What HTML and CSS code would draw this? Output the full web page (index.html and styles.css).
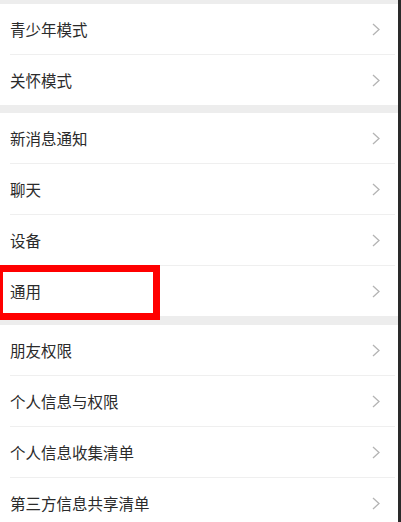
FILE: index.html
```html
<!DOCTYPE html>
<html lang="zh-CN">
<head>
<meta charset="utf-8">
<link rel="stylesheet" href="styles.css">
</head>
<body>
<div class="page">
  <div class="gap gap-top"></div>
  <div class="group">
    <div class="row"><span class="label">青少年模式</span><svg class="chev" viewBox="0 0 8 13"><polyline points="1,1 7,6.5 1,12"/></svg></div>
    <div class="row"><span class="label">关怀模式</span><svg class="chev" viewBox="0 0 8 13"><polyline points="1,1 7,6.5 1,12"/></svg></div>
  </div>
  <div class="gap"></div>
  <div class="group">
    <div class="row"><span class="label">新消息通知</span><svg class="chev" viewBox="0 0 8 13"><polyline points="1,1 7,6.5 1,12"/></svg></div>
    <div class="row"><span class="label">聊天</span><svg class="chev" viewBox="0 0 8 13"><polyline points="1,1 7,6.5 1,12"/></svg></div>
    <div class="row"><span class="label">设备</span><svg class="chev" viewBox="0 0 8 13"><polyline points="1,1 7,6.5 1,12"/></svg></div>
    <div class="row highlighted"><span class="label">通用</span><svg class="chev" viewBox="0 0 8 13"><polyline points="1,1 7,6.5 1,12"/></svg><div class="mark"></div></div>
  </div>
  <div class="gap gap-lower"></div>
  <div class="group">
    <div class="row"><span class="label">朋友权限</span><svg class="chev" viewBox="0 0 8 13"><polyline points="1,1 7,6.5 1,12"/></svg></div>
    <div class="row"><span class="label">个人信息与权限</span><svg class="chev" viewBox="0 0 8 13"><polyline points="1,1 7,6.5 1,12"/></svg></div>
    <div class="row"><span class="label">个人信息收集清单</span><svg class="chev" viewBox="0 0 8 13"><polyline points="1,1 7,6.5 1,12"/></svg></div>
    <div class="row"><span class="label">第三方信息共享清单</span><svg class="chev" viewBox="0 0 8 13"><polyline points="1,1 7,6.5 1,12"/></svg></div>
  </div>
</div>
</body>
</html>
```

FILE: styles.css
```css
html, body {
  margin: 0;
  padding: 0;
  background: #ffffff;
  overflow: hidden;
}
.page {
  width: 398px;
  height: 522px;
  border-right: 3px solid #2a2a2a;
  background: #ffffff;
  font-family: "Noto Sans CJK SC", "Noto Sans", sans-serif;
  overflow: hidden;
}
.gap {
  height: 8px;
  background: #ededed;
}
.gap-top {
  height: 4px;
}
.gap-lower {
  height: 9px;
}
.group {
  display: flex;
  flex-direction: column;
}
.row {
  position: relative;
  height: 50px;
  display: flex;
  align-items: center;
  justify-content: space-between;
  padding: 0 18px 0 10px;
  background: #ffffff;
}
.row + .row {
  margin-top: 1px;
}
.row + .row::before {
  content: "";
  position: absolute;
  left: 10px;
  right: 3px;
  top: -1px;
  height: 1px;
  background: #efefef;
}
.label {
  font-size: 15.5px;
  color: #2b2b2b;
  letter-spacing: 0;
}
.chev {
  width: 8px;
  height: 13px;
  fill: none;
  stroke: #b4b4b4;
  stroke-width: 1.3;
}
.mark {
  position: absolute;
  left: -4px;
  top: -1px;
  width: 150px;
  height: 41px;
  border: 7px solid #ff0000;
}
```
